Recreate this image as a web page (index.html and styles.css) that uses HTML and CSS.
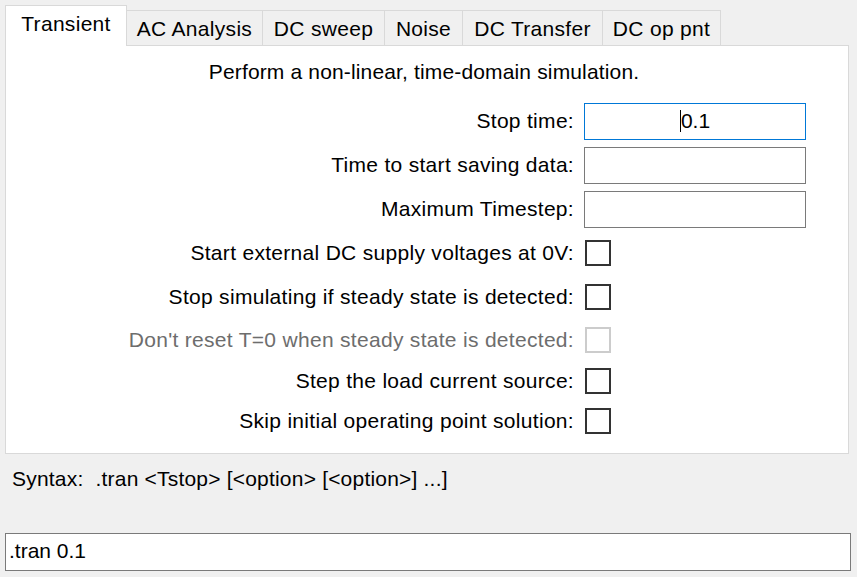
FILE: index.html
```html
<!DOCTYPE html>
<html>
<head>
<meta charset="utf-8">
<link rel="stylesheet" href="styles.css">
</head>
<body>
<div class="dialog">
  <div class="tabs">
    <div class="tab active w-tran">Transient</div>
    <div class="tab w-ac">AC Analysis</div>
    <div class="tab w-dcs">DC sweep</div>
    <div class="tab w-noise">Noise</div>
    <div class="tab w-dct">DC Transfer</div>
    <div class="tab w-op">DC op pnt</div>
  </div>
  <div class="panel">
    <div class="heading">Perform a non-linear, time-domain simulation.</div>
    <div class="form">
      <div class="label">Stop time:</div>
      <div class="ctl"><div class="field focused"><span class="caret"></span>0.1</div></div>

      <div class="label">Time to start saving data:</div>
      <div class="ctl"><div class="field"></div></div>

      <div class="label">Maximum Timestep:</div>
      <div class="ctl"><div class="field"></div></div>

      <div class="label">Start external DC supply voltages at 0V:</div>
      <div class="ctl"><div class="check"></div></div>

      <div class="label">Stop simulating if steady state is detected:</div>
      <div class="ctl"><div class="check"></div></div>

      <div class="label disabled">Don't reset T=0 when steady state is detected:</div>
      <div class="ctl"><div class="check disabled"></div></div>

      <div class="label">Step the load current source:</div>
      <div class="ctl"><div class="check"></div></div>

      <div class="label">Skip initial operating point solution:</div>
      <div class="ctl"><div class="check"></div></div>
    </div>
  </div>
  <div class="syntax">Syntax:&nbsp; .tran &lt;Tstop&gt; [&lt;option&gt; [&lt;option&gt;] ...]</div>
  <div class="command">.tran 0.1</div>
</div>
</body>
</html>
```
FILE: styles.css
```css
html, body {
  margin: 0;
  padding: 0;
  background: #f0f0f0;
}
body {
  font-family: "Liberation Sans", Arial, sans-serif;
  font-size: 21px;
  color: #000;
  width: 857px;
  height: 577px;
  overflow: hidden;
}
.dialog {
  padding: 5px 6px 0 5px;
}
.tabs {
  display: flex;
  align-items: flex-end;
  height: 40px;
  position: relative;
  z-index: 1;
}
.tab {
  box-sizing: border-box;
  height: 35px;
  border: 1px solid #d9d9d9;
  border-bottom: none;
  border-left: none;
  background: #f0f0f0;
  display: flex;
  align-items: center;
  justify-content: center;
  padding-top: 1px;
  letter-spacing: 0.3px;
}
.tab.active {
  background: #fff;
  border-left: 1px solid #d9d9d9;
  margin-bottom: -1px;
  padding-top: 0;
  padding-bottom: 4px;
  height: 41px;
}
.w-tran { width: 122px; }
.w-ac { width: 136px; }
.w-dcs { width: 122px; }
.w-noise { width: 78px; }
.w-dct { width: 140px; }
.w-op { width: 118px; }
.panel {
  box-sizing: border-box;
  width: 844px;
  height: 409px;
  background: #fff;
  border: 1px solid #d9d9d9;
}
.heading {
  height: 53px;
  display: flex;
  align-items: center;
  justify-content: center;
  padding-right: 6px;
  padding-bottom: 1px;
  box-sizing: border-box;
  letter-spacing: 0.15px;
}
.form {
  display: grid;
  grid-template-columns: 1fr 222px;
  grid-template-rows: 44px 44px 44px 44px 44px 42px 40px 40px;
  column-gap: 10px;
  padding-right: 42px;
}
.label {
  display: flex;
  align-items: center;
  justify-content: flex-end;
  letter-spacing: 0.3px;
}
.label.disabled {
  color: #6d6d6d;
}
.ctl {
  display: flex;
  align-items: center;
}
.field {
  box-sizing: border-box;
  width: 222px;
  height: 37px;
  border: 1px solid #7a7a7a;
  display: flex;
  align-items: center;
  justify-content: center;
}
.field.focused {
  border-color: #0078d7;
}
.caret {
  display: inline-block;
  width: 1px;
  height: 22px;
  background: #000;
}
.check {
  box-sizing: border-box;
  width: 26px;
  height: 26px;
  margin-left: 1px;
  border: 2px solid #333;
}
.check.disabled {
  border-color: #ccc;
}
.syntax {
  height: 49px;
  display: flex;
  align-items: center;
  padding-left: 7px;
  letter-spacing: 0.2px;
}
.command {
  box-sizing: border-box;
  width: 846px;
  height: 38px;
  margin-top: 30px;
  border: 1px solid #7a7a7a;
  background: #fff;
  display: flex;
  align-items: center;
  padding-left: 3px;
  padding-bottom: 3px;
}
```
